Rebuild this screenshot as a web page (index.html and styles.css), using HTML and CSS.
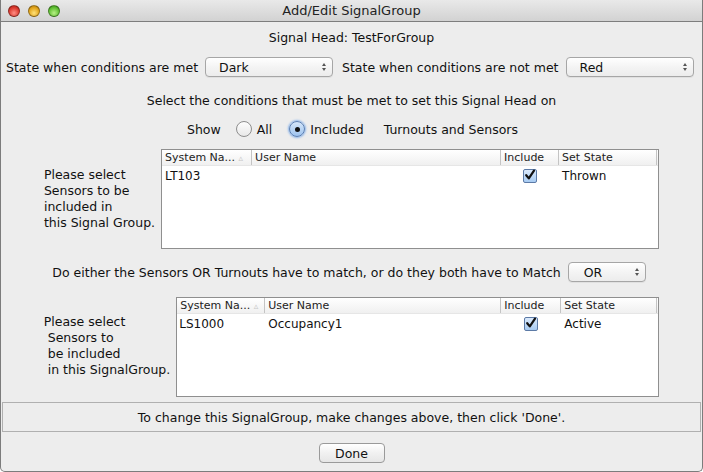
FILE: index.html
```html
<!DOCTYPE html>
<html>
<head>
<meta charset="utf-8">
<link rel="stylesheet" href="styles.css">
</head>
<body>
<div class="window">
  <div class="titlebar">
    <div class="lights">
      <span class="light red"></span>
      <span class="light yellow"></span>
      <span class="light green"></span>
    </div>
    <div class="title">Add/Edit SignalGroup</div>
  </div>
  <div class="content">
    <div class="row head-row">Signal Head: TestForGroup</div>
    <div class="row state-row">
      <span class="lbl">State when conditions are met</span>
      <div class="combo combo-wide"><span>Dark</span><span class="arrows"><i class="up"></i><i class="down"></i></span></div>
      <span class="lbl">State when conditions are not met</span>
      <div class="combo combo-wide"><span>Red</span><span class="arrows"><i class="up"></i><i class="down"></i></span></div>
    </div>
    <div class="row select-row">Select the conditions that must be met to set this Signal Head on</div>
    <div class="row show-row">
      <span class="show-lbl">Show</span>
      <span class="radio"></span><span class="radio-lbl">All</span>
      <span class="radio checked"><span class="dot"></span></span><span class="radio-lbl">Included</span>
      <span class="after-lbl">Turnouts and Sensors</span>
    </div>
    <div class="row table-row t1">
      <div class="side-lbl">Please select
Sensors to be
included in
this Signal Group.</div>
      <div class="table table1">
        <div class="thead">
          <div class="th">System Na... <span class="sort">▵</span></div>
          <div class="th">User Name</div>
          <div class="th">Include</div>
          <div class="th">Set State</div>
          <div class="th"></div>
        </div>
        <div class="tr">
          <div class="td">LT103</div>
          <div class="td"></div>
          <div class="td center"><span class="check"><svg viewBox="0 0 14 14" width="14" height="14"><path d="M3.2 7.2 L5.8 10.4 L11 2.6" fill="none" stroke="#111" stroke-width="2.2" stroke-linecap="round" stroke-linejoin="round"/></svg></span></div>
          <div class="td">Thrown</div>
        </div>
      </div>
    </div>
    <div class="row match-row">
      <span class="lbl">Do either the Sensors OR Turnouts have to match, or do they both have to Match</span>
      <div class="combo combo-small"><span>OR</span><span class="arrows"><i class="up"></i><i class="down"></i></span></div>
    </div>
    <div class="row table-row t2">
      <div class="side-lbl">Please select
 Sensors to
 be included
 in this SignalGroup.</div>
      <div class="table table2">
        <div class="thead">
          <div class="th">System Na... <span class="sort">▵</span></div>
          <div class="th">User Name</div>
          <div class="th">Include</div>
          <div class="th">Set State</div>
          <div class="th"></div>
        </div>
        <div class="tr">
          <div class="td">LS1000</div>
          <div class="td">Occupancy1</div>
          <div class="td center"><span class="check"><svg viewBox="0 0 14 14" width="14" height="14"><path d="M3.2 7.2 L5.8 10.4 L11 2.6" fill="none" stroke="#111" stroke-width="2.2" stroke-linecap="round" stroke-linejoin="round"/></svg></span></div>
          <div class="td">Active</div>
        </div>
      </div>
    </div>
    <div class="status">To change this SignalGroup, make changes above, then click 'Done'.</div>
    <div class="row done-row">
      <button class="btn">Done</button>
    </div>
  </div>
</div>
</body>
</html>
```
FILE: styles.css
```css
html, body {
  margin: 0;
  padding: 0;
  background: #ffffff;
}
body {
  font-family: "DejaVu Sans", "Liberation Sans", sans-serif;
  font-size: 12.5px;
  color: #111;
}
.window {
  width: 703px;
  height: 472px;
  box-sizing: border-box;
  display: flex;
  flex-direction: column;
  border-left: 1px solid #7c7c7c;
  border-right: 1px solid #7c7c7c;
  border-bottom: 1px solid #7c7c7c;
  border-radius: 0 0 5px 5px;
  overflow: hidden;
  background: #ededed;
}
.titlebar {
  height: 22px;
  box-sizing: border-box;
  background: linear-gradient(#e9e9e9, #d2d2d2);
  border-bottom: 1px solid #7e7e7e;
  display: flex;
  align-items: center;
  position: relative;
}
.lights {
  display: flex;
  gap: 8px;
  padding-left: 7px;
}
.light {
  width: 12px;
  height: 12px;
  border-radius: 50%;
  box-sizing: border-box;
  border: 1px solid rgba(0,0,0,0.35);
}
.light.red { background: radial-gradient(circle at 50% 70%, #ff8f85, #dc3b30 60%, #a81e14); }
.light.yellow { background: radial-gradient(circle at 50% 70%, #ffe27a, #e2a51c 60%, #a87208); }
.light.green { background: radial-gradient(circle at 50% 70%, #b8f086, #62c135 60%, #2f8512); }
.title {
  position: absolute;
  left: 0;
  right: 0;
  text-align: center;
  font-size: 13px;
  color: #222;
  pointer-events: none;
}
.content {
  flex: 1;
  display: flex;
  flex-direction: column;
}
.row {
  display: flex;
  align-items: center;
  justify-content: center;
}
.head-row {
  height: 18px;
  margin-top: 6px;
}
.state-row {
  justify-content: flex-start;
  margin-top: 11px;
  height: 20px;
  padding-left: 5px;
}
.state-row .lbl:nth-child(3) { margin-left: 9px; }
.combo {
  height: 20px;
  box-sizing: border-box;
  border: 1px solid #a6a6a6;
  border-radius: 4px;
  background: linear-gradient(#ffffff, #f4f4f4 50%, #ececec);
  display: flex;
  align-items: center;
  justify-content: space-between;
  padding: 0 6px 0 13px;
  margin-left: 7px;
  box-shadow: 0 1px 0 rgba(0,0,0,0.05);
}
.combo-wide { width: 128px; }
.combo-small { width: 78px; padding-left: 15px; }
.arrows {
  display: flex;
  flex-direction: column;
  gap: 2px;
}
.arrows i {
  display: block;
  width: 0;
  height: 0;
  border-left: 2.5px solid transparent;
  border-right: 2.5px solid transparent;
}
.arrows .up { border-bottom: 3px solid #555; }
.arrows .down { border-top: 3px solid #555; }
.select-row {
  margin-top: 14px;
  height: 18px;
}
.show-row {
  margin-top: 11px;
  height: 18px;
  padding-left: 2px;
}
.show-lbl { margin-right: 15px; }
.radio {
  width: 16px;
  height: 16px;
  box-sizing: border-box;
  border-radius: 50%;
  border: 1px solid #8e8e8e;
  background: linear-gradient(#fdfdfd, #e8e8e8);
  display: flex;
  align-items: center;
  justify-content: center;
  margin-right: 5px;
}
.radio.checked {
  border-color: #5a7fb4;
  background: linear-gradient(#d6e7fa, #9ec3ee);
  box-shadow: 0 0 2px 1px #8ab4ea;
  margin-left: 4px;
}
.radio .dot {
  width: 5px;
  height: 5px;
  border-radius: 50%;
  background: #111;
}
.radio-lbl { margin-right: 13px; }
.after-lbl { margin-left: 7px; }
.table-row {
  margin-top: 11px;
  gap: 6px;
}
.side-lbl {
  white-space: pre;
  line-height: 16px;
}
.table {
  box-sizing: border-box;
  border: 1px solid #8f8f8f;
  background: #fff;
  height: 100px;
}
.table1 { width: 498px; }
.table2 { width: 483px; }
.thead {
  display: grid;
  height: 15px;
  background: linear-gradient(#ffffff, #f0f0f0);
  border-bottom: 1px solid #e6e6e6;
  font-size: 11px;
}
.tr {
  display: grid;
  height: 18px;
  align-items: center;
  font-size: 12px;
}
.table1 .thead, .table1 .tr { grid-template-columns: 90px 249px 58px 98px 1fr; }
.table2 .thead, .table2 .tr { grid-template-columns: 88px 236px 60px 96px 1fr; }
.th {
  box-sizing: border-box;
  border-right: 1px solid #c4c4c4;
  padding-left: 3px;
  line-height: 15px;
  white-space: nowrap;
  overflow: hidden;
  color: #222;
}
.th:last-child { border-right: none; }
.sort { color: #c8c8c8; font-size: 9px; }
.td {
  padding-left: 3px;
  white-space: nowrap;
  padding-top: 1px;
}
.table2 .td:first-child { padding-left: 2px; }
.td.center { display: flex; justify-content: center; padding-left: 0; padding-top: 2px; }
.check {
  width: 14px;
  height: 14px;
  box-sizing: border-box;
  border: 1px solid #5c7aa6;
  border-radius: 2px;
  background: linear-gradient(#dbeafc, #a7cbf2);
  display: block;
  position: relative;
}
.check svg {
  position: absolute;
  left: -1px;
  top: -2px;
}
.match-row {
  margin-top: 13px;
  height: 20px;
  padding-right: 5px;
}
.t2 { margin-top: 15px; }
.t2 .side-lbl { padding-bottom: 2px; }
.status {
  margin: 5px 1px 0 1px;
  height: 30px;
  box-sizing: border-box;
  border: 1px solid #b0b0b0;
  display: flex;
  align-items: center;
  justify-content: center;
}
.done-row {
  margin-top: 11px;
}
.btn {
  width: 66px;
  height: 20px;
  box-sizing: border-box;
  border: 1px solid #9a9a9a;
  border-radius: 4px;
  background: linear-gradient(#ffffff, #f1f1f1 50%, #e6e6e6);
  font-family: inherit;
  font-size: 12.5px;
  color: #111;
  padding: 0;
}
```
